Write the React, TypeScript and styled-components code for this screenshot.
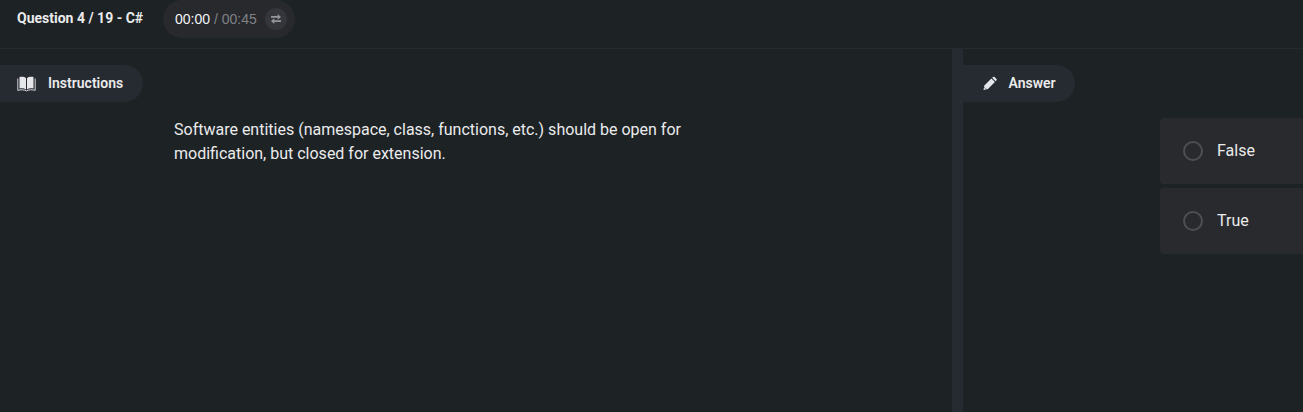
import React from "react";
import styled, { createGlobalStyle } from "styled-components";

const GlobalStyle = createGlobalStyle`
  *, *::before, *::after { box-sizing: border-box; }
  body { margin: 0; background: #1d2225; overflow: hidden; }
`;

const Page = styled.div`
  display: flex;
  flex-direction: column;
  height: 100vh;
  background: #1d2225;
  color: #ebebec;
  font-family: Roboto, sans-serif;
`;

const Header = styled.header`
  display: flex;
  align-items: flex-start;
  flex: none;
  height: 49px;
  padding-left: 17px;
  border-bottom: 1px solid #262a2e;
`;

const QuestionTitle = styled.h1`
  margin: 0;
  width: 146px;
  font-size: 14px;
  font-weight: 700;
  line-height: 36px;
  white-space: nowrap;
`;

const Timer = styled.div`
  display: flex;
  align-items: center;
  width: 132px;
  height: 38px;
  padding-left: 12px;
  border-radius: 19px;
  background: #27292d;
  font-family: "Liberation Sans", Arial, sans-serif;
  font-size: 14px;
  white-space: pre;
`;

const Elapsed = styled.span`
  color: #f4f4f5;
`;

const Limit = styled.span`
  color: #808186;
`;

const SwapButton = styled.button`
  display: flex;
  align-items: center;
  justify-content: center;
  width: 22px;
  height: 22px;
  margin: 0 0 0 8px;
  padding: 0;
  border: 0;
  border-radius: 50%;
  background: #34363c;
  color: #94969b;
`;

const Panels = styled.main`
  display: flex;
  flex: 1;
  min-height: 0;
`;

const Panel = styled.section<{ $width?: number }>`
  flex: ${({ $width }) => ($width ? `0 0 ${$width}px` : "1")};
  min-width: 0;
  padding-top: 16px;
  overflow: hidden;
`;

const Splitter = styled.div`
  flex: 0 0 11px;
  background: #262a31;
`;

const PanelTab = styled.div<{ $width: number; $left: number; $gap: number }>`
  display: flex;
  align-items: center;
  width: ${({ $width }) => $width}px;
  height: 37px;
  padding-left: ${({ $left }) => $left}px;
  gap: ${({ $gap }) => $gap}px;
  border-radius: 0 19px 19px 0;
  background: #262a31;
  font-size: 14px;
  font-weight: 600;
  line-height: 36px;

  svg { flex: none; }
`;

const TabLabel = styled.span`
  padding-bottom: 1px;
  line-height: 35px;
`;

const Statement = styled.p`
  width: 540px;
  margin: 16px 0 0 174px;
  font-size: 16px;
  line-height: 24px;
`;

const Options = styled.div`
  display: flex;
  flex-direction: column;
  gap: 4px;
  margin: 16px 0 0 197px;
`;

const Option = styled.label`
  display: flex;
  align-items: center;
  height: 66px;
  padding-left: 23px;
  gap: 14px;
  border-radius: 4px 0 0 4px;
  background: #282a2e;
  font-size: 16px;
  line-height: 24px;
`;

const Radio = styled.span`
  width: 20px;
  height: 20px;
  border: 2px solid #4e4f53;
  border-radius: 50%;
`;

const SwapIcon = () => (
  <svg width="12" height="12" viewBox="0 0 12 12" fill="currentColor">
    <path d="M1 3.100h6.700V1L11 3.900 7.700 6.700V4.700H1z" />
    <path d="M11 7.300H4.300V5.200L1 8.100l3.300 2.800V8.900H11z" />
  </svg>
);

const BookIcon = () => (
  <svg width="19" height="16" viewBox="0 0 19 16" fill="#e6e7ea">
    <path d="M2.500 1C5 .5 7.600.8 9 2.300v11.200C7.300 12.200 5 12 2.500 12.500z" />
    <path d="M16.500 1C14 .5 11.400.8 10 2.300v11.200c1.700-1.300 4-1.500 6.500-1z" />
    <path
      d="M.8 2.500v11.900c3-.9 6-.9 8.700.5 2.700-1.400 5.700-1.400 8.700-.5V2.500"
      fill="none"
      stroke="#e6e7ea"
      strokeWidth=".9"
    />
  </svg>
);

const PencilIcon = () => (
  <svg width="14" height="15" viewBox="0 0 15 15" fill="#e6e7ea">
    <path d="M1.500 9.700 9 2.200l3.800 3.800-7.500 7.500L.5 14.500z" />
    <path d="M9.800 1.400 10.900.5c.4-.4 1-.4 1.400 0l2.200 2.200c.4.400.4 1 0 1.400l-1 1.100z" />
    <path d="m1.400 11.500 2 2" stroke="#262a31" strokeWidth=".6" />
  </svg>
);

const answers = ["False", "True"];

export default function App() {
  return (
    <Page>
      <GlobalStyle />
      <Header>
        <QuestionTitle>Question 4 / 19 - C#</QuestionTitle>
        <Timer>
          <Elapsed>00:00</Elapsed>
          <Limit> / 00:45</Limit>
          <SwapButton aria-label="Switch timer display">
            <SwapIcon />
          </SwapButton>
        </Timer>
      </Header>
      <Panels>
        <Panel $width={952}>
          <PanelTab $width={143} $left={17} $gap={12}>
            <BookIcon />
            <TabLabel>Instructions</TabLabel>
          </PanelTab>
          <Statement>
            Software entities (namespace, class, functions, etc.) should be open for modification, but closed for
            extension.
          </Statement>
        </Panel>
        <Splitter />
        <Panel>
          <PanelTab $width={112} $left={20} $gap={11.5}>
            <PencilIcon />
            <TabLabel>Answer</TabLabel>
          </PanelTab>
          <Options>
            {answers.map((answer) => (
              <Option key={answer}>
                <Radio />
                {answer}
              </Option>
            ))}
          </Options>
        </Panel>
      </Panels>
    </Page>
  );
}
